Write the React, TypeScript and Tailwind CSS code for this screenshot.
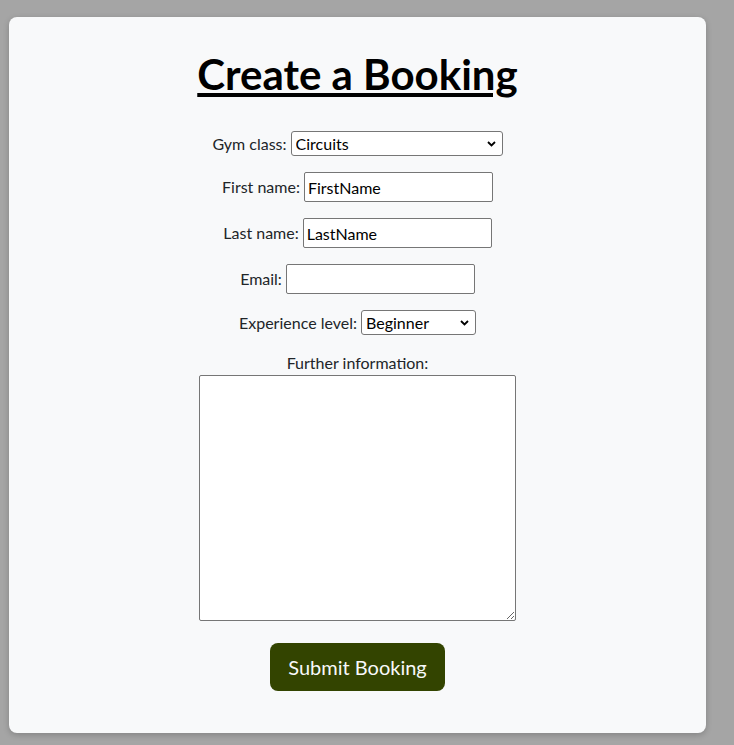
const Chevron = () => (
  <svg width="9" height="6" viewBox="0 0 9 6" className="absolute right-[7px] top-1/2 -translate-y-1/2 pointer-events-none">
    <path d="M1 1 L4.5 4.5 L8 1" fill="none" stroke="#000" strokeWidth="1.8" />
  </svg>
)

const App = () => {
  return (
    <div className="min-h-screen bg-[#a5a5a5] pt-[17px] pl-[9px] pb-[12px] font-['Lato',sans-serif] text-[#212529]">
      <div className="w-[697px] h-[716px] bg-[#f8f9fa] rounded-lg shadow-[0_2px_6px_rgba(0,0,0,0.2)] flex flex-col items-center pt-[33px]">
        <h1 className="text-[42px] leading-[48px] font-bold text-black underline">Create a Booking</h1>
        <form className="flex flex-col items-center mt-[33px] text-base">
          <div className="flex items-center gap-1 h-[25px]">
            <label>Gym class:</label>
            <div className="relative">
              <select className="appearance-none w-[212px] h-[25px] border border-[#767676] rounded-[3px] bg-white pl-[4px] text-black leading-5">
                <option>Circuits</option>
                <option>Yoga</option>
                <option>Spin</option>
              </select>
              <Chevron />
            </div>
          </div>
          <div className="flex items-center gap-1 mt-4">
            <label>First name:</label>
            <input defaultValue="FirstName" className="w-[189px] h-[30px] border border-[#767676] rounded-[2px] bg-white px-[3px] text-black" />
          </div>
          <div className="flex items-center gap-1 mt-4">
            <label>Last name:</label>
            <input defaultValue="LastName" className="w-[189px] h-[30px] border border-[#767676] rounded-[2px] bg-white px-[3px] text-black" />
          </div>
          <div className="flex items-center gap-1 mt-4">
            <label>Email:</label>
            <input className="w-[189px] h-[30px] border border-[#767676] rounded-[2px] bg-white px-[3px] text-black" />
          </div>
          <div className="flex items-center gap-1 mt-4 h-[25px]">
            <label>Experience level:</label>
            <div className="relative">
              <select className="appearance-none w-[115px] h-[25px] border border-[#767676] rounded-[3px] bg-white pl-[4px] text-black leading-5">
                <option>Beginner</option>
                <option>Intermediate</option>
                <option>Advanced</option>
              </select>
              <Chevron />
            </div>
          </div>
          <label className="mt-[16px] leading-6">Further information:</label>
          <textarea className="w-[317px] h-[246px] border border-[#767676] rounded-[2px] bg-white" />
          <button type="button" className="mt-[22px] w-[175px] h-[48px] bg-[#334400] text-[#f8f9fa] text-xl rounded-lg">Submit Booking</button>
        </form>
      </div>
    </div>
  )
}

export default App
